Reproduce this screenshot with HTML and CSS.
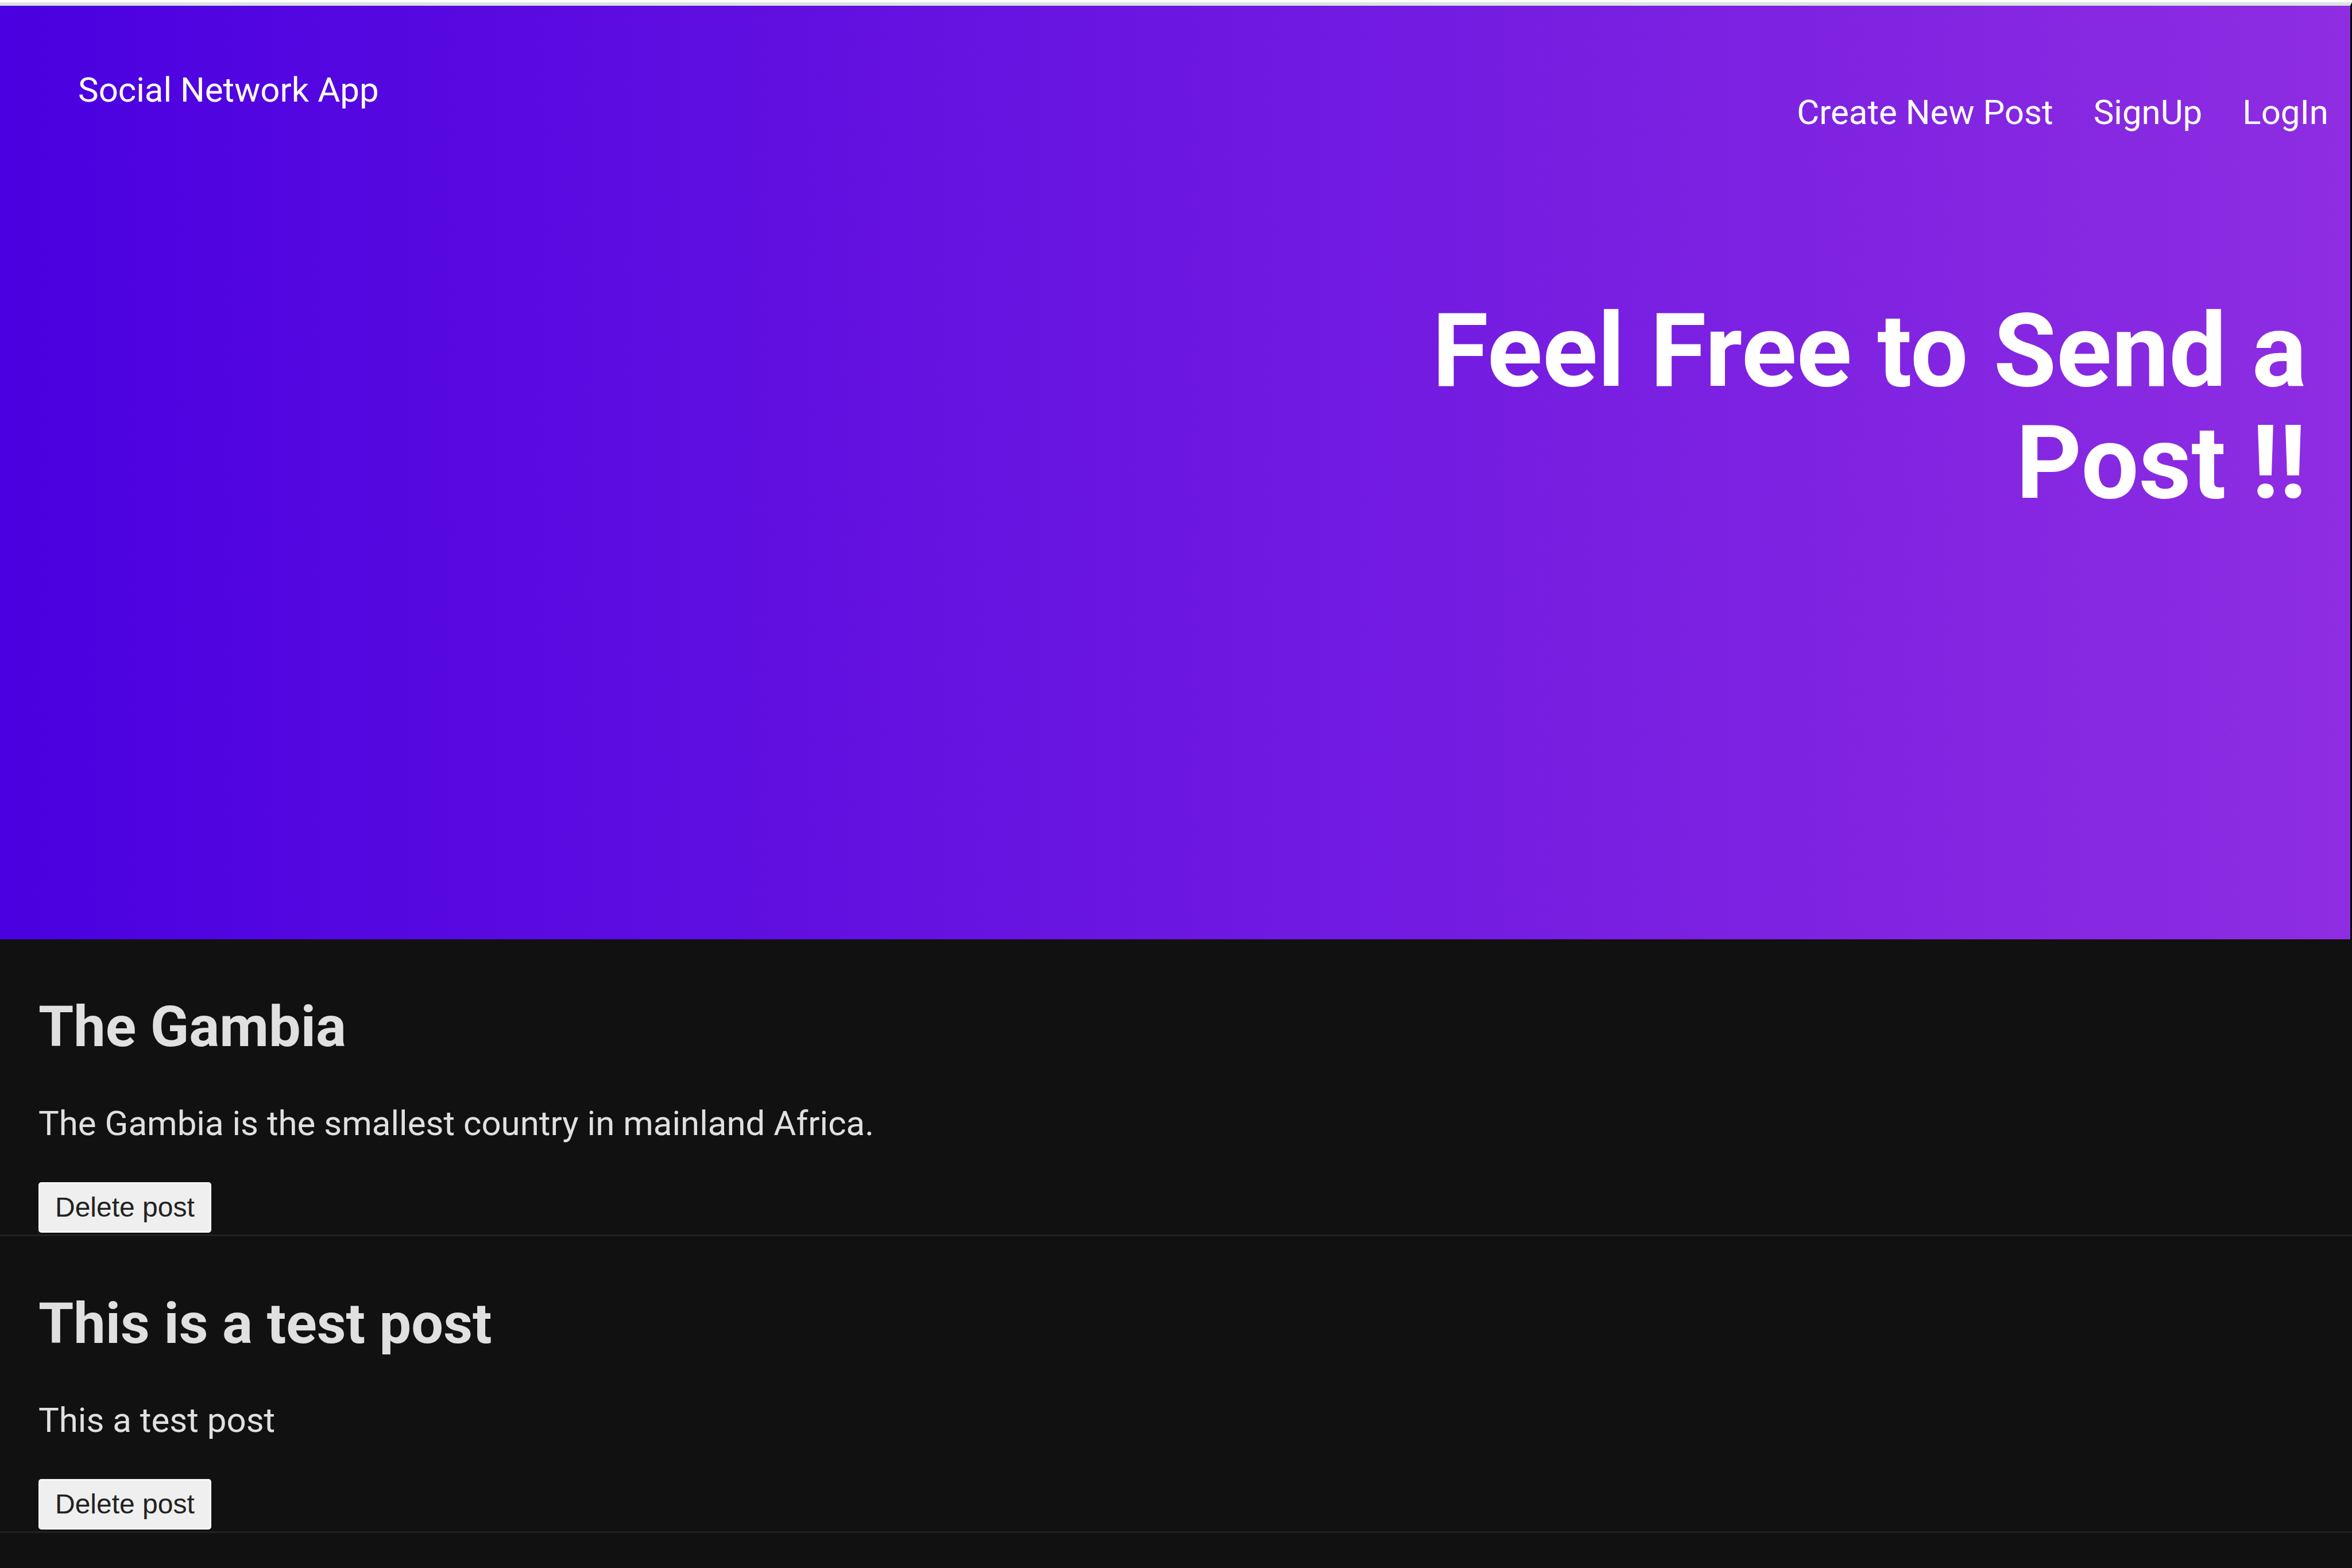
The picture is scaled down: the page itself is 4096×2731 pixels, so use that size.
FILE: index.html
```html
<!DOCTYPE html>
<html lang="en">
<head>
<meta charset="utf-8">
<meta name="viewport" content="width=device-width, initial-scale=1">
<title>Social Network App</title>
<link rel="stylesheet" href="styles.css">
</head>
<body>
<header class="hero">
  <div class="topbar">
    <a class="brand" href="#">Social Network App</a>
    <nav class="nav">
      <a class="nav-link" href="#new">Create New Post</a>
      <a class="nav-link" href="#signup">SignUp</a>
      <a class="nav-link" href="#login">LogIn</a>
    </nav>
  </div>
  <h1 class="hero-title">Feel Free to Send a Post !!</h1>
</header>
<main>
  <article class="post">
    <h2 class="post-title">The Gambia</h2>
    <p class="post-text">The Gambia is the smallest country in mainland Africa.</p>
    <button class="delete" type="button">Delete post</button>
  </article>
  <article class="post">
    <h2 class="post-title">This is a test post</h2>
    <p class="post-text">This a test post</p>
    <button class="delete" type="button">Delete post</button>
  </article>
</main>
</body>
</html>
```
FILE: styles.css
```css
* {
  box-sizing: border-box;
  margin: 0;
}

body {
  border-top: 4px solid #fff;
  background: #111;
  color: #e0e0e0;
  font-family: Roboto, "Liberation Sans", sans-serif;
  font-size: 60px;
  line-height: 72px;
}

.hero {
  border-top: 6px solid #dce2df;
  border-right: 3px solid #000;
  padding-bottom: 732px;
  background: linear-gradient(to right, #4a00e0, #8e2de2);
  color: #fff;
}

.topbar {
  display: flex;
  justify-content: space-between;
  padding: 111px 38px 0 136px;
}

.brand,
.nav-link {
  color: inherit;
  text-decoration: none;
}

.nav {
  display: flex;
  gap: 70px;
  padding-top: 39px;
}

.hero-title {
  max-width: 1680px;
  margin-top: 282px;
  margin-left: auto;
  padding-right: 76px;
  font-size: 178px;
  font-weight: 700;
  line-height: 195px;
  text-align: right;
}

.post {
  display: flex;
  flex-direction: column;
  align-items: flex-start;
  padding: 92px 67px 3px;
  border-bottom: 3px solid #222;
}

.post-title {
  margin-bottom: 73px;
  font-size: 99px;
  font-weight: 700;
  line-height: 120px;
}

.post-text {
  margin-bottom: 66px;
}

.delete {
  height: 88px;
  padding: 0 26px;
  border: 3px solid #f6f6f6;
  border-radius: 5px;
  background: #efefef;
  color: #222;
  font-family: "Liberation Sans", Arial, sans-serif;
  font-size: 48px;
  line-height: 56px;
}
```
